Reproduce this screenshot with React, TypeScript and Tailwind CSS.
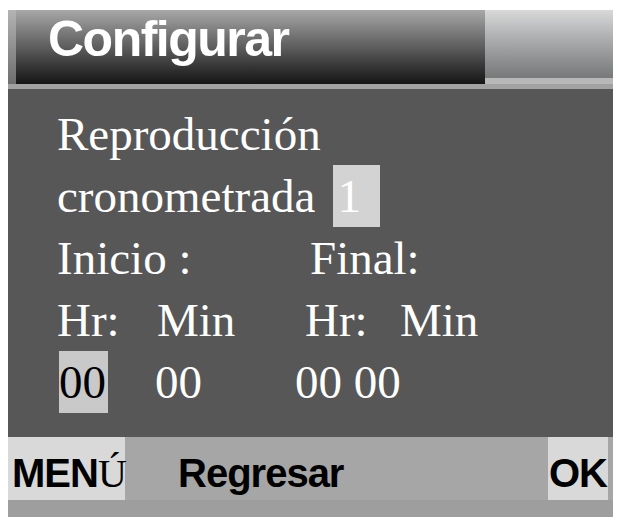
export default function App() {
  const serif = { fontFamily: '"Liberation Serif", "Times New Roman", serif' };
  const sans = { fontFamily: '"Liberation Sans", Arial, sans-serif' };
  return (
    <div className="w-[618px] h-[520px] bg-white overflow-hidden">
      <div className="ml-[8px] pt-[10px] w-[605px] flex flex-col">
        {/* Header */}
        <div className="h-[74px] flex">
          <div className="w-[8px] bg-gradient-to-b from-[#b4b4b4] to-[#6e6e6e]" />
          <div className="w-[469px] bg-gradient-to-b from-[#a8a8a8] via-[#5e5e5e] to-[#161616]">
            <div
              className="pl-[32px] pt-[3px] text-[50px] leading-[52px] font-bold text-white tracking-[-1.5px]"
              style={sans}
            >
              Configurar
            </div>
          </div>
          <div className="flex-1 flex flex-col">
            <div className="flex-1 bg-gradient-to-b from-[#d8d8d8] via-[#a4a6a8] to-[#77787a]" />
            <div className="h-[6px] bg-[#b8b8b8]" />
          </div>
        </div>
        <div className="h-[5px] bg-[#a2a2a2]" />
        {/* Body */}
        <div
          className="h-[348px] bg-[#575757] pl-[49px] pt-[14px] text-white text-[47px] leading-[62px]"
          style={serif}
        >
          <div className="h-[62px] flex">
            <span>Reproducción</span>
          </div>
          <div className="h-[62px] flex">
            <span>cronometrada</span>
            <span className="ml-[18px] w-[47px] bg-[#d3d3d3] pl-[4px]">1</span>
          </div>
          <div className="h-[62px] flex">
            <span className="w-[253px]">Inicio :</span>
            <span>Final:</span>
          </div>
          <div className="h-[62px] flex">
            <span className="w-[100px]">Hr:</span>
            <span className="w-[148px]">Min</span>
            <span className="w-[95px]">Hr:</span>
            <span>Min</span>
          </div>
          <div className="h-[62px] flex">
            <span className="ml-[2px] w-[49px] bg-[#c9c9c9] text-black">00</span>
            <span className="ml-[47px] w-[140px]">00</span>
            <span>00 00</span>
          </div>
        </div>
        {/* Footer */}
        <div className="h-[80px] bg-[#a6a6a6] flex flex-col">
          <div
            className="h-[63px] flex text-black text-[40px] leading-[63px] font-bold tracking-[-1px]"
            style={sans}
          >
            <div className="w-[117px] bg-[#d9d9d9] pl-[4px] pt-[5px]">
              MEN
              <span className="font-normal tracking-normal" style={serif}>
                Ú
              </span>
            </div>
            <div className="w-[423px] pl-[53px] pt-[5px]">Regresar</div>
            <div className="w-[60px] bg-[#d9d9d9] pl-[1px] pt-[5px]">OK</div>
          </div>
          <div className="flex-1 bg-[#9e9e9e]" />
        </div>
      </div>
    </div>
  );
}
